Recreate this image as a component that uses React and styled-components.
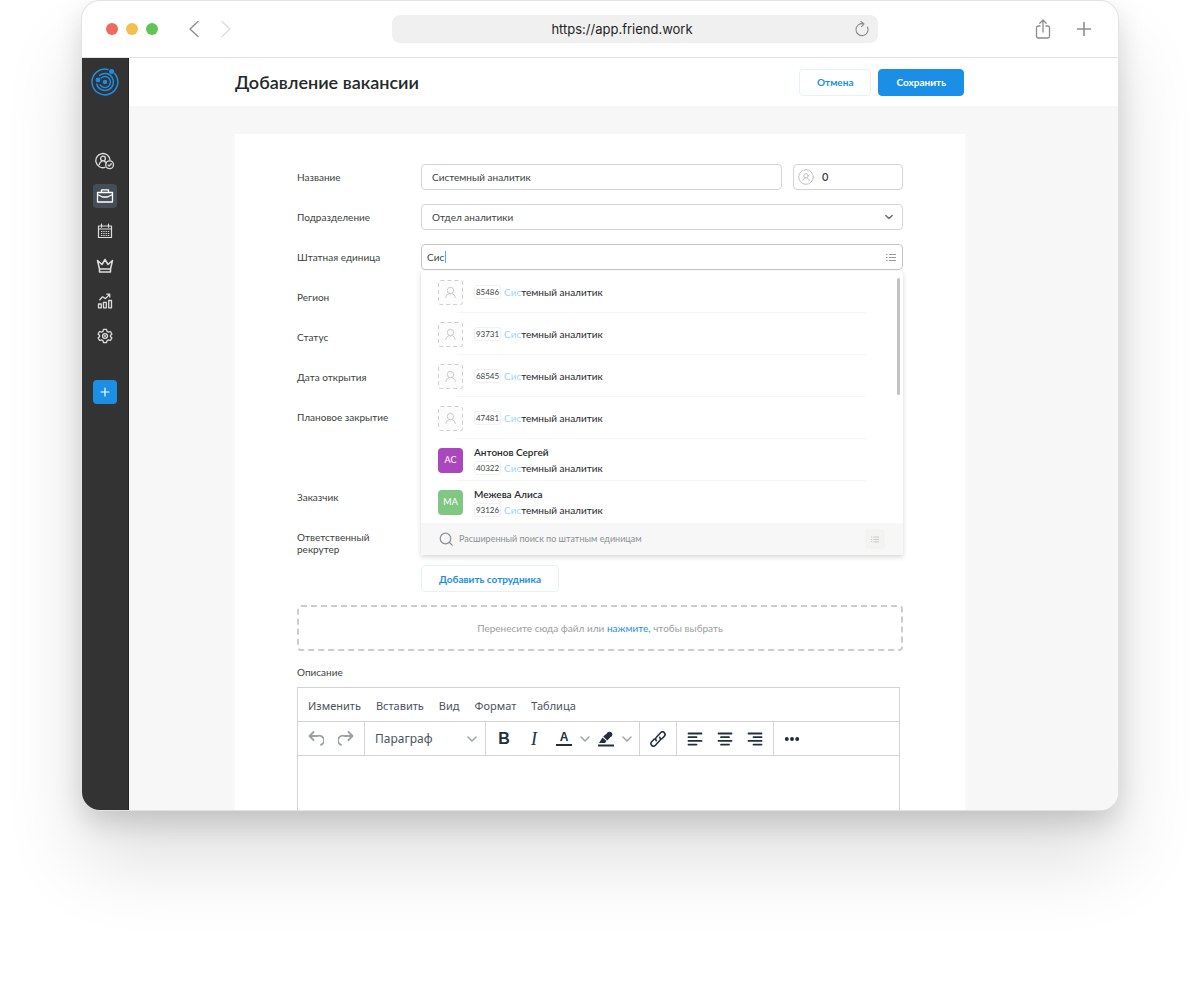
import { useState } from 'react';
import styled, { createGlobalStyle, css } from 'styled-components';

const GlobalStyle = createGlobalStyle`
  :root {
    --blue: #1b8fe6;
    --pale-blue: #e3f2fd;
    --match: #9fd4fc;
    --text: #3b3f41;
    --heading: #24282a;
    --muted: #9a9ea1;
    --line: #d3d3d3;
    --surface: #f7f7f7;
    --sidebar: #333333;
    --editor: #222f3e;
  }

  * {
    box-sizing: border-box;
  }

  body {
    margin: 0;
    background: #fff;
    color: var(--text);
    font: 10px/12px Lato, sans-serif;
  }

  button,
  input,
  select,
  textarea {
    font: inherit;
    color: inherit;
  }

  button {
    padding: 0;
    border: none;
    background: none;
    cursor: pointer;
  }
`;

const Page = styled.div`
  min-height: 100vh;
  padding: 1px 82px 180px;
  overflow: hidden;
`;

const BrowserWindow = styled.div`
  border-radius: 18px;
  overflow: hidden;
  background: #fff;
  box-shadow: 0 0 0 1px #e2e2e2, 0 50px 80px rgba(0, 0, 0, 0.13),
    0 12px 28px rgba(0, 0, 0, 0.15);
`;

const Chrome = styled.div`
  display: grid;
  grid-template-columns: 286fr 486px 216fr;
  align-items: center;
  height: 57px;
  padding: 0 24px;
  border-bottom: 1px solid #e2e2e2;
`;

const ChromeLeft = styled.div`
  display: flex;
  align-items: center;
`;

const ChromeRight = styled.div`
  display: flex;
  justify-content: flex-end;
  align-items: center;
  gap: 23px;
  color: #8c8c8c;
`;

const Lights = styled.div`
  display: flex;
  gap: 8px;
  margin-right: 30px;
`;

const Light = styled.span`
  width: 12px;
  height: 12px;
  border-radius: 50%;
  background: ${props => props.$color};
`;

const NavButton = styled.button`
  display: flex;
  margin-right: 20px;
  color: #8a8a8a;

  &:disabled {
    color: #dcdcdc;
  }
`;

const IconButton = styled.button`
  display: flex;
`;

const AddressBar = styled.div`
  display: grid;
  grid-template-columns: 1fr auto 1fr;
  align-items: center;
  height: 28px;
  padding: 0 8px;
  border-radius: 8px;
  background: #f0f0f0;
  color: #1f1f1f;
  font: 13px/16px Inter, sans-serif;
`;

const Reload = styled.button`
  display: flex;
  grid-column: 3;
  justify-self: end;
  color: #8c8c8c;
`;

const Address = styled.span`
  grid-column: 2;
  margin-right: 26px;
`;

const Layout = styled.div`
  display: flex;
`;

const Sidebar = styled.aside`
  display: flex;
  flex-direction: column;
  align-items: center;
  flex: none;
  width: 47px;
  padding: 10px 1px 0 0;
  background: var(--sidebar);
  box-shadow: inset -1px 0 #262626;
`;

const Logo = styled.a`
  display: flex;
  margin-bottom: 53px;
  color: var(--blue);
`;

const Nav = styled.nav`
  display: flex;
  flex-direction: column;
  gap: 11px;
  margin-bottom: 32px;
`;

const NavLink = styled.a`
  display: flex;
  justify-content: center;
  align-items: center;
  width: 24px;
  height: 24px;
  border-radius: 4px;
  color: #dedede;

  ${props =>
    props.$active &&
    css`
      background: #454d57;
      color: #fff;
    `}
`;

const AddButton = styled.button`
  display: flex;
  justify-content: center;
  align-items: center;
  width: 24px;
  height: 24px;
  border-radius: 4px;
  background: var(--blue);
  color: #fff;
`;

const Main = styled.main`
  flex: 1;
  min-width: 0;
  background: var(--surface);
`;

const TopBar = styled.header`
  display: flex;
  justify-content: space-between;
  align-items: center;
  height: 48px;
  padding: 0 154px 0 106px;
  background: #fff;
`;

const Title = styled.h1`
  margin: 0;
  color: var(--heading);
  font-size: 18px;
  line-height: 24px;
  font-weight: 600;
`;

const Actions = styled.div`
  display: flex;
  gap: 7px;
`;

const Button = styled.button`
  height: 27px;
  padding: 0 17px;
  border: 1px solid var(--pale-blue);
  border-radius: 4px;
  color: var(--blue);
  font-weight: 700;

  ${props =>
    props.$primary &&
    css`
      border-color: var(--blue);
      background: var(--blue);
      color: #fff;
    `}
`;

const Card = styled.form`
  margin: 28px 153px 0 106px;
  padding: 30px 62px 0;
  background: #fff;
`;

const Fields = styled.div`
  display: grid;
  gap: 14px;
`;

const Field = styled.div`
  display: grid;
  grid-template-columns: 124px 1fr;
  align-items: start;
`;

const Label = styled.label`
  grid-column: 1;
  padding-top: 7px;
`;

const Controls = styled.div`
  position: relative;
  display: flex;
  grid-column: 2;
  gap: 11px;
`;

const Stack = styled.div`
  display: flex;
  flex-direction: column;
  align-items: flex-start;
  gap: 15px;
`;

const box = css`
  width: 100%;
  height: 26px;
  border: 1px solid var(--line);
  border-radius: 4px;
  background: #fff;
`;

const Input = styled.input`
  ${box}
  padding: 0 10px;
  outline: none;
`;

const Select = styled.select`
  ${box}
  padding: 0 10px;
  appearance: none;
`;

const SelectWrap = styled.div`
  display: grid;
  flex: 1;
  align-items: center;

  > * {
    grid-area: 1 / 1;
  }

  > svg {
    justify-self: end;
    margin-right: 10px;
    color: #6b7378;
    pointer-events: none;
  }
`;

const CountBox = styled.div`
  ${box}
  flex: none;
  width: 110px;
  display: flex;
  align-items: center;
  gap: 8px;
  padding: 0 4px;
  color: #c4c4c4;
`;

const CountInput = styled.input`
  flex: 1;
  min-width: 0;
  padding: 0;
  border: none;
  outline: none;
  color: var(--text);
  font-size: 11px;
  font-weight: 600;
`;

const SearchBox = styled.div`
  ${box}
  display: flex;
  align-items: center;
  padding: 0 6px 0 5px;
  border-color: #c6c6c6;
  color: #9b9b9b;
`;

const SearchInput = styled.input`
  width: 18px;
  padding: 0;
  border: none;
  outline: none;
  color: var(--text);
`;

const Caret = styled.span`
  width: 1px;
  height: 12px;
  margin-right: auto;
  background: #4fb0f7;
`;

const Dropdown = styled.div`
  position: absolute;
  z-index: 1;
  top: 27px;
  left: 0;
  right: 0;
  background: #fff;
  box-shadow: 0 2px 5px rgba(0, 0, 0, 0.16);
`;

const OptionList = styled.ul`
  margin: 0;
  padding: 0;
  list-style: none;
`;

const Option = styled.li`
  position: relative;
  display: flex;
  align-items: center;
  gap: 11px;
  height: 42px;
  padding: 0 17px;
  cursor: pointer;

  &:not(:last-child)::after {
    content: '';
    position: absolute;
    bottom: 0;
    left: 36px;
    right: 37px;
    height: 1px;
    background: #f6f6f6;
  }
`;

const Avatar = styled.span`
  display: flex;
  justify-content: center;
  align-items: center;
  flex: none;
  width: 25px;
  height: 25px;
  border-radius: 4px;
  background: ${props => props.$color};
  color: #fff;
  font-size: 9px;
`;

const PersonName = styled.div`
  margin-bottom: 3px;
  color: var(--heading);
  font-weight: 600;
`;

const Position = styled.div`
  display: flex;
  align-items: center;
  gap: 3px;
  color: var(--heading);
`;

const Code = styled.span`
  width: 27px;
  border: 1px solid #f1f1f1;
  border-radius: 3px;
  color: var(--text);
  font-size: 8px;
  text-align: center;
`;

const Match = styled.span`
  color: var(--match);
`;

const Thumb = styled.span`
  position: absolute;
  top: 7px;
  right: 3px;
  width: 3px;
  height: 117px;
  border-radius: 2px;
  background: #c2c2c6;
`;

const DropdownFooter = styled.div`
  display: flex;
  align-items: center;
  gap: 6px;
  height: 32px;
  padding: 0 18px;
  background: var(--surface);
  color: #8a9094;
  font-size: 9px;
`;

const ListButton = styled.button`
  display: flex;
  justify-content: center;
  align-items: center;
  width: 20px;
  height: 20px;
  margin-left: auto;
  border-radius: 4px;
  background: #f3f3f2;
  color: #bdbdbd;
`;

const DropZone = styled.div`
  display: flex;
  justify-content: center;
  align-items: center;
  height: 46px;
  margin-top: 13px;
  border: 2px dashed #cdcdcd;
  border-radius: 4px;
  color: var(--muted);
`;

const Link = styled.a`
  color: var(--blue);
  text-decoration: none;
`;

const EditorLabel = styled.label`
  display: block;
  margin: 15px 0 9px;
`;

const Editor = styled.div`
  margin-right: 3px;
  border: 1px solid var(--line);
  border-bottom: none;
  color: #4a5360;
  font: 11px/16px 'Noto Sans', sans-serif;
`;

const MenuBar = styled.div`
  display: flex;
  align-items: center;
  gap: 15px;
  height: 34px;
  padding: 2px 10px 0;
  border-bottom: 1px solid var(--line);
`;

const ToolBar = styled.div`
  display: flex;
  height: 34px;
  border-bottom: 1px solid var(--line);
  color: var(--editor);
`;

const Group = styled.div`
  display: flex;
  align-items: center;
  gap: 14px;
  width: ${props => props.$width}px;
  padding-left: 10px;
  border-right: 1px solid var(--line);

  &:last-child {
    border-right: none;
  }
`;

const ColorTools = styled.div`
  display: flex;
  align-items: center;
  gap: 8px;
`;

const Tool = styled.button`
  display: flex;
  flex: none;
  color: ${props => (props.$dim ? '#9aa0a8' : 'inherit')};
`;

const LetterTool = styled.button`
  flex: none;
  width: 16px;
  font: bold 16px/16px 'Liberation Sans', sans-serif;
  text-align: center;

  ${props =>
    props.$italic &&
    css`
      font: italic 18px/16px 'Liberation Serif', serif;
    `}

  ${props =>
    props.$underlined &&
    css`
      border-bottom: 2px solid currentColor;
      font-size: 12px;
      line-height: 13px;
    `}
`;

const ParagraphButton = styled.button`
  display: flex;
  flex: 1;
  justify-content: space-between;
  align-items: center;
  padding-right: 8px;
  color: #4a5360;
  font-size: 12px;

  svg {
    color: #9aa0a8;
  }
`;

const TextArea = styled.textarea`
  display: block;
  width: 100%;
  height: 54px;
  padding: 10px;
  border: none;
  outline: none;
  resize: none;
`;

const units = [
  { code: '85486' },
  { code: '93731' },
  { code: '68545' },
  { code: '47481' },
  { code: '40322', name: 'Антонов Сергей', initials: 'АС', color: '#ab47bc' },
  { code: '93126', name: 'Межева Алиса', initials: 'МА', color: '#81c784' },
];

const menus = ['Изменить', 'Вставить', 'Вид', 'Формат', 'Таблица'];

function Icon({ width = 16, height = width, box = `0 0 ${width} ${height}`, stroke = 1, children }) {
  return (
    <svg
      width={width}
      height={height}
      viewBox={box}
      fill="none"
      stroke="currentColor"
      strokeWidth={stroke}
      strokeLinecap="round"
      strokeLinejoin="round"
      aria-hidden="true"
    >
      {children}
    </svg>
  );
}

function LogoIcon() {
  return (
    <Icon width={28} stroke={1.5}>
      <path d="M17 1.4A12.9 12.9 0 1 0 23.6 5.4" />
      <path d="M8.6 7.4A8.5 8.5 0 1 1 5.8 16.3" />
      <path d="M9.3 17A5.500 5.500 0 1 0 10.200 10" />
      <circle cx="14" cy="14" r="2.3" fill="currentColor" stroke="none" />
      <circle cx="7" cy="12" r="2.4" fill="currentColor" stroke="none" />
      <circle cx="20.6" cy="3.6" r="2.5" fill="currentColor" stroke="none" />
    </Icon>
  );
}

function CandidatesIcon() {
  return (
    <Icon width={20} height={18} stroke={1.3}>
      <path d="M10 15.4A7.1 7.1 0 1 1 15 8" />
      <circle cx="8" cy="6.6" r="2.4" />
      <path d="M4.2 12.6c.2-1.6 1.2-2.700 2.400-3.200M11.200 11c-.4-.8-1-1.300-1.800-1.600" />
      <circle cx="14.6" cy="12.8" r="3.9" />
      <path d="M13 12.900l1.200 1.200 2.100-2.300" />
    </Icon>
  );
}

function BriefcaseIcon() {
  return (
    <Icon width={18} height={16} stroke={1.3}>
      <path d="M1.500 4.500h15v9.500h-15zM5.500 4.300V1.800h7v2.500M1.500 6.500l5 2.500h5l5-2.500" />
    </Icon>
  );
}

function CalendarIcon() {
  return (
    <Icon stroke={1.2}>
      <path d="M1.500 3h13v11.500h-13zM1.500 6h13M4.500 1.200v3M11.500 1.200v3" />
      <path d="M4 8.500h8.500M4 10.500h8.500M4 12.500h8.500" strokeDasharray="1.300 1" strokeLinecap="butt" />
    </Icon>
  );
}

function CrownIcon() {
  return (
    <Icon width={18} height={16} stroke={1.5}>
      <path d="M3.500 11L1.500 2.500l4.500 4L9 1.500l3 5 4.500-4-2 8.500zM3.500 11v3h11v-3" />
    </Icon>
  );
}

function ChartIcon() {
  return (
    <Icon stroke={1.3}>
      <path d="M1.500 11h2.800v3.800H1.500zM6.500 9.300h2.800v5.500H6.500zM11.700 7.500h2.800v7.300h-2.800z" />
      <path d="M2.800 6.800l2.700-3 3 1.800 4-4.200M9.800 1.200h2.900v2.900" />
    </Icon>
  );
}

function GearIcon() {
  return (
    <Icon stroke={1.3}>
      <path d="M6.500 1.300h3l.5 2 1.400.8 2-.6 1.500 2.500-1.500 1.400v1.200l1.500 1.400-1.500 2.500-2-.6-1.400.8-.5 2h-3l-.5-2-1.400-.8-2 .6L1.100 10l1.500-1.400V7.400L1.100 6l1.500-2.500 2 .6L6 3.300z" />
      <circle cx="8" cy="8" r="2.400" />
      <circle cx="8" cy="8" r=".4" />
    </Icon>
  );
}

function EmptyAvatar() {
  return (
    <Icon width={25}>
      <rect x=".5" y=".5" width="24" height="24" rx="2" fill="#fcfcfc" stroke="#cfcfcf" strokeDasharray="4 3" strokeLinecap="butt" />
      <g stroke="#cbcbcb">
        <circle cx="12.500" cy="10.500" r="3.200" />
        <path d="M7.800 17.500c.2-2 1.400-3.300 3.200-4M17.200 17.500c-.2-2-1.400-3.300-3.200-4" />
      </g>
    </Icon>
  );
}

function ListIcon({ width = 10 }) {
  return (
    <Icon width={width} box="0 0 10 10">
      <path d="M3 2.500h7M3 5.500h7M3 8.500h7M0 2.500h1.500M0 5.500h1.500M0 8.500h1.500" strokeLinecap="butt" />
    </Icon>
  );
}

function ChevronIcon({ width = 10, stroke = 1.4 }) {
  return (
    <Icon width={width} height={6} box="0 0 10 6" stroke={stroke}>
      <path d="M1 1l4 4 4-4" />
    </Icon>
  );
}

function AlignIcon({ short }) {
  return (
    <Icon width={16} height={14} stroke={1.8}>
      <path d={`M1.500 1.500h13M${short} 5.200h8M1.500 8.900h13M${short} 12.600h8`} />
    </Icon>
  );
}

function App() {
  return (
    <>
      <GlobalStyle />
      <Page>
        <BrowserWindow>
          <BrowserChrome />
          <Layout>
            <SideMenu />
            <Main>
              <TopBar>
                <Title>Добавление вакансии</Title>
                <Actions>
                  <Button type="button">Отмена</Button>
                  <Button type="submit" form="vacancy" $primary>
                    Сохранить
                  </Button>
                </Actions>
              </TopBar>
              <VacancyForm />
            </Main>
          </Layout>
        </BrowserWindow>
      </Page>
    </>
  );
}

function BrowserChrome() {
  return (
    <Chrome>
      <ChromeLeft>
        <Lights>
          <Light $color="#ed6a5e" />
          <Light $color="#f5bf4f" />
          <Light $color="#61c554" />
        </Lights>
        <NavButton aria-label="Назад">
          <Icon width={12} height={18} stroke={1.3}>
            <path d="M10 1.500L2 9l8 7.500" />
          </Icon>
        </NavButton>
        <NavButton aria-label="Вперёд" disabled>
          <Icon width={12} height={18} stroke={1.3}>
            <path d="M2 1.500L10 9l-8 7.500" />
          </Icon>
        </NavButton>
      </ChromeLeft>
      <AddressBar>
        <Address>https://app.friend.work</Address>
        <Reload aria-label="Обновить">
          <Icon width={16} stroke={1.1}>
            <path d="M9.500 2.800A6 6 0 1 0 13.400 6M7 .5l3 2.400-2.400 2.800" />
          </Icon>
        </Reload>
      </AddressBar>
      <ChromeRight>
        <IconButton aria-label="Поделиться">
          <Icon width={16} height={20} stroke={1.3}>
            <path d="M5 7H3.200A1.700 1.700 0 0 0 1.500 8.700v8.600A1.700 1.700 0 0 0 3.200 19h9.600a1.700 1.700 0 0 0 1.700-1.700V8.700A1.700 1.700 0 0 0 12.800 7H11M8 13V1.200M4.800 4.200L8 1l3.200 3.200" />
          </Icon>
        </IconButton>
        <IconButton aria-label="Новая вкладка">
          <Icon width={20} stroke={1.6}>
            <path d="M10 3.500v13M3.500 10h13" />
          </Icon>
        </IconButton>
      </ChromeRight>
    </Chrome>
  );
}

function SideMenu() {
  return (
    <Sidebar>
      <Logo href="#home" aria-label="FriendWork">
        <LogoIcon />
      </Logo>
      <Nav>
        <NavLink href="#candidates" aria-label="Кандидаты">
          <CandidatesIcon />
        </NavLink>
        <NavLink href="#vacancies" aria-label="Вакансии" $active>
          <BriefcaseIcon />
        </NavLink>
        <NavLink href="#calendar" aria-label="Календарь">
          <CalendarIcon />
        </NavLink>
        <NavLink href="#rating" aria-label="Рейтинг">
          <CrownIcon />
        </NavLink>
        <NavLink href="#reports" aria-label="Отчёты">
          <ChartIcon />
        </NavLink>
        <NavLink href="#settings" aria-label="Настройки">
          <GearIcon />
        </NavLink>
      </Nav>
      <AddButton aria-label="Добавить">
        <Icon width={10} stroke={1.2}>
          <path d="M5 1v8M1 5h8" />
        </Icon>
      </AddButton>
    </Sidebar>
  );
}

function VacancyForm() {
  const [title, setTitle] = useState('Системный аналитик');
  const [count, setCount] = useState('0');

  return (
    <Card id="vacancy" onSubmit={e => e.preventDefault()}>
      <Fields>
        <Field>
          <Label htmlFor="title">Название</Label>
          <Controls>
            <Input id="title" value={title} onChange={e => setTitle(e.target.value)} />
            <CountBox>
              <Icon width={16}>
                <circle cx="8" cy="8" r="7.3" />
                <circle cx="8" cy="6.8" r="2.2" />
                <path d="M4.800 11.500c.2-1.300 1-2.100 2.100-2.600M11.200 11.500c-.2-1.300-1-2.100-2.100-2.600" />
              </Icon>
              <CountInput aria-label="Количество" value={count} onChange={e => setCount(e.target.value)} />
            </CountBox>
          </Controls>
        </Field>
        <Field>
          <Label htmlFor="department">Подразделение</Label>
          <SelectWrap>
            <Select id="department">
              <option>Отдел аналитики</option>
            </Select>
            <ChevronIcon width={8} stroke={1.8} />
          </SelectWrap>
        </Field>
        <Field>
          <Label htmlFor="unit">Штатная единица</Label>
          <UnitSearch />
        </Field>
        <Field>
          <Label htmlFor="region">Регион</Label>
          <Select id="region" />
        </Field>
        <Field>
          <Label htmlFor="status">Статус</Label>
          <Select id="status" />
        </Field>
        <Field>
          <Label htmlFor="opened">Дата открытия</Label>
          <Input id="opened" />
        </Field>
        <Field>
          <Label htmlFor="closing">Плановое закрытие</Label>
          <Input id="closing" />
        </Field>
        <Field>
          <Controls>
            <Input aria-label="Комментарий" />
          </Controls>
        </Field>
        <Field>
          <Label htmlFor="customer">Заказчик</Label>
          <Input id="customer" />
        </Field>
        <Field>
          <Label htmlFor="recruiter">
            Ответственный
            <br />
            рекрутер
          </Label>
          <Stack>
            <Input id="recruiter" />
            <Button type="button">Добавить сотрудника</Button>
          </Stack>
        </Field>
      </Fields>
      <DropZone>
        <span>
          Перенесите сюда файл или <Link href="#upload">нажмите,</Link> чтобы выбрать
        </span>
      </DropZone>
      <EditorLabel htmlFor="description">Описание</EditorLabel>
      <TextEditor />
    </Card>
  );
}

function UnitSearch() {
  const [query, setQuery] = useState('Сис');

  return (
    <Controls>
      <SearchBox>
        <SearchInput id="unit" value={query} onChange={e => setQuery(e.target.value)} />
        <Caret />
        <ListIcon />
      </SearchBox>
      <Dropdown>
        <OptionList>
          {units.map(unit => (
            <UnitOption unit={unit} key={unit.code} />
          ))}
        </OptionList>
        <Thumb />
        <DropdownFooter>
          <Icon width={14} stroke={1.2}>
            <circle cx="6.5" cy="6.5" r="5.3" />
            <path d="M10.500 10.500l2.700 2.700" />
          </Icon>
          Расширенный поиск по штатным единицам
          <ListButton type="button" aria-label="Список">
            <ListIcon width={8} />
          </ListButton>
        </DropdownFooter>
      </Dropdown>
    </Controls>
  );
}

function UnitOption({ unit: { code, name, initials, color } }) {
  return (
    <Option>
      {name ? <Avatar $color={color}>{initials}</Avatar> : <EmptyAvatar />}
      <div>
        {name && <PersonName>{name}</PersonName>}
        <Position>
          <Code>{code}</Code>
          <span>
            <Match>Сис</Match>темный аналитик
          </span>
        </Position>
      </div>
    </Option>
  );
}

function TextEditor() {
  return (
    <Editor>
      <MenuBar>
        {menus.map(menu => (
          <button type="button" key={menu}>
            {menu}
          </button>
        ))}
      </MenuBar>
      <ToolBar>
        <Group $width={67}>
          <Tool type="button" aria-label="Отменить" $dim>
            <Icon width={16} stroke={1.8}>
              <path d="M5.500 1L1.500 5l4 4M2 5h7.500a4.700 4.700 0 0 1 3.500 8.800" />
            </Icon>
          </Tool>
          <Tool type="button" aria-label="Повторить" $dim>
            <Icon width={16} stroke={1.8}>
              <path d="M10.500 1l4 4-4 4M14 5H6.500A4.700 4.700 0 0 0 3 13.800" />
            </Icon>
          </Tool>
        </Group>
        <Group $width={121}>
          <ParagraphButton type="button">
            Параграф
            <ChevronIcon />
          </ParagraphButton>
        </Group>
        <Group $width={154}>
          <LetterTool type="button" aria-label="Полужирный">
            B
          </LetterTool>
          <LetterTool type="button" aria-label="Курсив" $italic>
            I
          </LetterTool>
          <ColorTools>
            <LetterTool type="button" aria-label="Цвет текста" $underlined>
              A
            </LetterTool>
            <Tool type="button" aria-label="Выбрать цвет текста" $dim>
              <ChevronIcon />
            </Tool>
            <Tool type="button" aria-label="Цвет фона">
              <Icon width={16}>
                <path d="M0 14.500h16" strokeWidth="2" strokeLinecap="butt" />
                <path d="M1 12l3.500-5.500 4 3.600L7 12zM5.200 5.600l3.200-2.800 3.800 3.600-3 3z" fill="currentColor" stroke="none" />
                <circle cx="11.500" cy="3.500" r="2.800" fill="currentColor" stroke="none" />
              </Icon>
            </Tool>
            <Tool type="button" aria-label="Выбрать цвет фона" $dim>
              <ChevronIcon />
            </Tool>
          </ColorTools>
        </Group>
        <Group $width={37}>
          <Tool type="button" aria-label="Ссылка">
            <Icon width={16} stroke={1.6}>
              <path d="M6.300 9.700a2.700 2.700 0 0 1 .3-3.700l4-4.300a2.500 2.500 0 0 1 3.700 3.500l-2.600 2.800M9.700 6.300a2.700 2.700 0 0 1-.3 3.700l-4 4.300a2.500 2.500 0 0 1-3.700-3.500l2.600-2.800" />
            </Icon>
          </Tool>
        </Group>
        <Group $width={97}>
          <Tool type="button" aria-label="По левому краю">
            <AlignIcon short={1.5} />
          </Tool>
          <Tool type="button" aria-label="По центру">
            <AlignIcon short={4} />
          </Tool>
          <Tool type="button" aria-label="По правому краю">
            <AlignIcon short={6.5} />
          </Tool>
        </Group>
        <Group $width={37}>
          <Tool type="button" aria-label="Ещё">
            <Icon width={16} stroke={0}>
              <g fill="currentColor">
                <circle cx="2.8" cy="8" r="2" />
                <circle cx="8" cy="8" r="2" />
                <circle cx="13.2" cy="8" r="2" />
              </g>
            </Icon>
          </Tool>
        </Group>
      </ToolBar>
      <TextArea id="description" />
    </Editor>
  );
}

export default App;
